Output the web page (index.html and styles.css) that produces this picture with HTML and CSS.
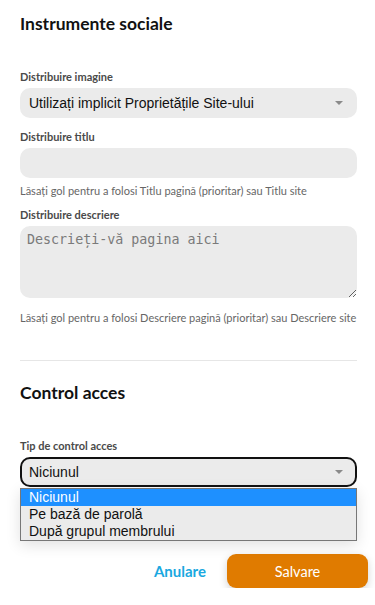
FILE: index.html
```html
<!DOCTYPE html>
<html lang="ro">

<head>
    <meta charset="UTF-8">
    <meta name="viewport" content="width=device-width, initial-scale=1.0">
    <title>Setări pagină</title>
    <link rel="stylesheet" href="styles.css">
</head>

<body>
    <div class="settings">
        <section class="section">
            <h2 class="section-title">Instrumente sociale</h2>

            <div class="field">
                <label class="field-label">Distribuire imagine</label>
                <div class="select-box">
                    <span class="select-value">Utilizați implicit Proprietățile Site-ului</span>
                    <span class="select-arrow"></span>
                </div>
            </div>

            <div class="field">
                <label class="field-label" for="shareTitle">Distribuire titlu</label>
                <input type="text" id="shareTitle" class="text-input">
                <p class="field-help">Lăsați gol pentru a folosi Titlu pagină (prioritar) sau Titlu site</p>
            </div>

            <div class="field">
                <label class="field-label" for="shareDesc">Distribuire descriere</label>
                <textarea id="shareDesc" class="text-area" placeholder="Descrieți-vă pagina aici"></textarea>
                <p class="field-help help-last">Lăsați gol pentru a folosi Descriere pagină (prioritar) sau Descriere site</p>
            </div>
        </section>

        <hr class="divider">

        <section class="section">
            <h2 class="section-title">Control acces</h2>

            <div class="field field-open">
                <label class="field-label">Tip de control acces</label>
                <div class="select-box select-focused">
                    <span class="select-value">Niciunul</span>
                    <span class="select-arrow"></span>
                </div>
                <ul class="dropdown">
                    <li class="dropdown-item selected">Niciunul</li>
                    <li class="dropdown-item">Pe bază de parolă</li>
                    <li class="dropdown-item">După grupul membrului</li>
                </ul>
            </div>
        </section>
    </div>

    <div class="actions">
        <button class="cancel-btn">Anulare</button>
        <button class="save-btn">Salvare</button>
    </div>
</body>

</html>
```

FILE: styles.css
```css
body {
    margin: 0;
    padding: 0;
    background: #fff;
    font-family: 'Lato', 'Noto Sans', sans-serif;
    color: #222;
}

.settings {
    padding: 13px 18px 0 20px;
}

.section-title {
    margin: 0;
    font-size: 17.5px;
    line-height: 22px;
    font-weight: bold;
    color: #111;
}

.section-title + .field {
    margin-top: 35px;
}

.field {
    position: relative;
    margin-bottom: 12px;
}

.field:last-child {
    margin-bottom: 0;
}

.field-label {
    display: block;
    font-size: 11px;
    line-height: 14px;
    font-weight: bold;
    color: #4a4a4a;
    margin-bottom: 4px;
}

.select-box {
    box-sizing: border-box;
    height: 30px;
    display: flex;
    align-items: center;
    justify-content: space-between;
    padding: 0 14px 0 9px;
    background: #ebebeb;
    border-radius: 10px;
    font-family: 'Liberation Sans', Arial, sans-serif;
    font-size: 14px;
    color: #111;
}

.select-arrow {
    width: 0;
    height: 0;
    border-left: 4px solid transparent;
    border-right: 4px solid transparent;
    border-top: 4px solid #8a8a8a;
}

.select-focused {
    border: 2px solid #111;
    padding-left: 7px;
    padding-right: 12px;
}

.text-input {
    display: block;
    box-sizing: border-box;
    width: 100%;
    height: 30px;
    border: none;
    border-radius: 10px;
    background: #ebebeb;
    outline: none;
}

.text-area {
    display: block;
    box-sizing: border-box;
    width: 100%;
    height: 72px;
    border: none;
    border-radius: 10px;
    background: #ebebeb;
    padding: 6px 7px;
    font-family: 'DejaVu Sans Mono', monospace;
    font-size: 13.33px;
    outline: none;
}

.text-area::placeholder {
    color: #7a7a7a;
}

.field-help {
    margin: 6px 0 -2px;
    font-size: 11px;
    line-height: 14px;
    color: #666;
}

.field-help.help-last {
    margin-top: 13px;
    margin-bottom: 0;
}

.divider {
    border: none;
    border-top: 1px solid #e6e6e6;
    margin: 35px 0 21px;
}

.dropdown {
    position: absolute;
    left: 0;
    right: 0;
    top: 49px;
    margin: 0;
    padding: 0;
    list-style: none;
    background: #ebebeb;
    border: 1px solid #777;
    box-shadow: 0 4px 14px rgba(0, 0, 0, 0.12);
    font-family: 'Liberation Sans', Arial, sans-serif;
    font-size: 14px;
    z-index: 2;
}

.dropdown-item {
    height: 17px;
    line-height: 17px;
    padding-left: 8px;
    color: #111;
}

.dropdown-item.selected {
    background: #1e90ff;
    color: #fff;
}

.actions {
    display: flex;
    justify-content: flex-end;
    align-items: center;
    gap: 21px;
    padding: 0 7px 0 0;
    margin-top: 67px;
}

.cancel-btn {
    background: none;
    border: none;
    padding: 0;
    font-family: 'Lato', sans-serif;
    font-size: 15px;
    font-weight: bold;
    color: #1aa8e0;
    cursor: pointer;
}

.save-btn {
    width: 141px;
    height: 34px;
    background: #e07b00;
    border: none;
    border-radius: 9px;
    color: #fff;
    font-family: 'Lato', sans-serif;
    font-size: 14.5px;
    box-shadow: 0 3px 8px rgba(0, 0, 0, 0.18);
    cursor: pointer;
}
```
